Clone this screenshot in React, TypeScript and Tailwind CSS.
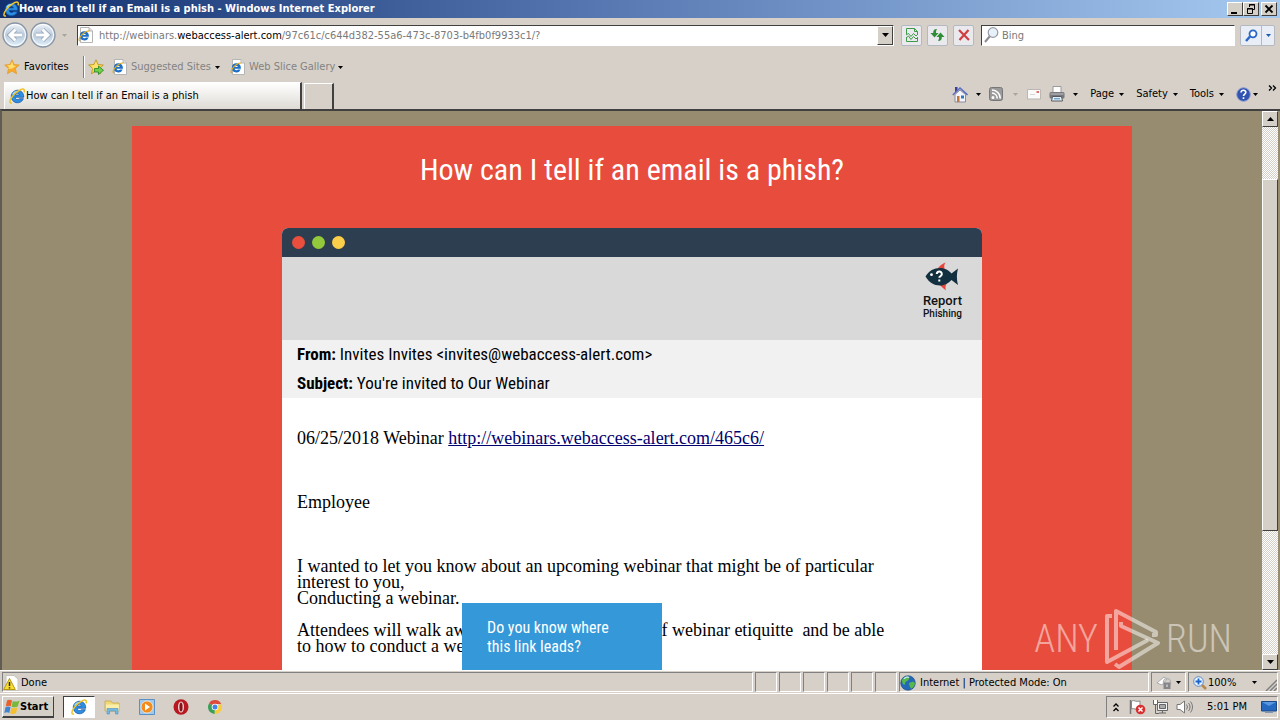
import type { ReactNode } from "react";

const raised = "border border-t-white border-l-white border-r-[#404040] border-b-[#404040] bg-[#d4d0c8]";
const sunken = "border border-t-[#808080] border-l-[#808080] border-r-white border-b-white";

function IeIcon({ className = "size-4" }: { className?: string }) {
  return (
    <svg viewBox="0 0 16 16" className={`shrink-0 ${className}`} aria-hidden="true">
      <path
        d="M8.400 2.200a6.300 6.300 0 1 0 6 8.500h-4a2.400 2.400 0 0 1-4.300-1.400h8.600c.3-4.200-2.500-7.100-6.300-7.100Zm-2.300 4.700a2.300 2.300 0 0 1 4.400 0Z"
        fill="#2d8fe2"
        stroke="#0f4fa2"
        strokeWidth=".7"
      />
      <path d="M3.600 6.500C4.500 4.500 6.300 3.500 8.500 3.500" fill="none" stroke="#a5e2ff" strokeWidth="1.200" />
      <path
        d="M3 15C-.2 15.600.6 12 3.400 8.400 6.800 4 12.400.2 14.700 1.300c1 .7.8 1.900.2 3"
        fill="none"
        stroke="#f0c428"
        strokeWidth="1.500"
      />
    </svg>
  );
}

function IePageIcon() {
  return (
    <svg viewBox="0 0 16 16" className="size-4 shrink-0" aria-hidden="true">
      <path d="M2.500.5h8.500l3.500 3.500v11.500h-12Z" fill="#fff" stroke="#b5b5b5" />
      <path d="M11 .5V4h3.500" fill="#ddd" stroke="#b5b5b5" />
      <path
        d="M6.300 4.300a4.600 4.600 0 1 0 4.400 6.300H8a1.900 1.900 0 0 1-3.400-.9h6.300C11.200 6.500 9.100 4.300 6.300 4.300ZM4.700 8.100a1.800 1.800 0 0 1 3.300 0Z"
        fill="#1d6fc8"
      />
      <path
        d="M2.200 13.900C0 13.800 1.300 10.900 3.600 8.200 6.200 5.200 9.800 3.200 11.200 4.300"
        fill="none"
        stroke="#e0ac20"
        strokeWidth="1.200"
      />
    </svg>
  );
}

function Caret({ className = "text-black" }: { className?: string }) {
  return (
    <svg viewBox="0 0 5 3" className={`h-[3px] w-[5px] shrink-0 ${className}`} aria-hidden="true">
      <path d="M0 0h5L2.500 3Z" fill="currentColor" />
    </svg>
  );
}

function StarIcon({ add = false }: { add?: boolean }) {
  return (
    <svg viewBox="0 0 16 16" className="size-4 shrink-0" aria-hidden="true">
      <path
        d="m8 .8 2.100 4.700 5.200.5-3.900 3.500 1.200 5.300L8 12.100l-4.600 2.700 1.200-5.300L.7 6l5.200-.5Z"
        fill={add ? "#f8d84a" : "#f9a82c"}
        stroke={add ? "#b8901a" : "#e0a030"}
        strokeWidth=".8"
      />
      <path d="M8 2.500 9.300 6.500 12 7 8 9.500 4.500 10 5 8 3 6.500l3.500-.5Z" fill="#ffe070" />
      {add && <path d="M6.500 9.500h4V7l5 4.300-5 4.200V13h-4Z" fill="#6fd04a" stroke="#22842a" strokeWidth=".8" />}
    </svg>
  );
}

function TitleBar() {
  return (
    <header className="flex h-[18px] shrink-0 items-center bg-linear-to-r from-[#12306f] from-0% via-[#5b7cb5] via-50% to-[#a6caf0] px-[3px] text-white">
      <IeIcon />
      <h1 className="font-['DejaVu_Sans_Condensed','DejaVu_Sans',sans-serif] text-[11px] leading-4 font-bold whitespace-nowrap">
        How can I tell if an Email is a phish - Windows Internet Explorer
      </h1>
      <div className="ml-auto flex text-black">
        <button aria-label="Minimize" className={`h-[14px] w-4 ${raised}`}>
          <svg viewBox="0 0 14 12" className="h-3 w-[14px]">
            <path d="M3 9h6v2H3Z" />
          </svg>
        </button>
        <button aria-label="Restore" className={`h-[14px] w-4 ${raised}`}>
          <svg viewBox="0 0 14 12" className="h-3 w-[14px]" fill="none" stroke="#000">
            <path d="M5.500 4V1.500h5v5H9M5 2h6M3.500 5.500h5v5h-5ZM3 6h6" />
          </svg>
        </button>
        <button aria-label="Close" className={`ml-0.5 h-[14px] w-4 ${raised}`}>
          <svg viewBox="0 0 14 12" className="h-3 w-[14px]" fill="none" stroke="#000" strokeWidth="1.800">
            <path d="m3.500 2.500 7 7m0-7-7 7" />
          </svg>
        </button>
      </div>
    </header>
  );
}

function NavButtons() {
  return (
    <div className="flex items-center gap-0.5">
      {["Back", "Forward"].map((label) => {
        const arrow =
          label === "Back" ? "M20 13H8m5.500-5.500L8 13l5.500 5.500" : "M6 13h12m-5.500-5.500L18 13l-5.500 5.500";
        return (
          <button key={label} aria-label={label} className="size-[26px]">
            <svg viewBox="0 0 26 26" className="size-[26px]" fill="none">
              <defs>
                <linearGradient id={`nav-${label}`} x1="0" y1="0" x2="0" y2="1">
                  <stop offset="0" stopColor="#f1f5f9" />
                  <stop offset=".5" stopColor="#b9c9db" />
                  <stop offset="1" stopColor="#e3f2fc" />
                </linearGradient>
              </defs>
              <circle cx="13" cy="13" r="12" fill={`url(#nav-${label})`} stroke="#8795a6" strokeWidth="1.300" />
              <circle cx="13" cy="13" r="10.500" stroke="#fff" />
              <path d={arrow} stroke="#8fa2b8" strokeWidth="4.500" />
              <path d={arrow} stroke="#fff" strokeWidth="3" />
            </svg>
          </button>
        );
      })}
    </div>
  );
}

function SquareButton({ label, children }: { label: string; children: ReactNode }) {
  return (
    <button
      aria-label={label}
      className="flex h-[21px] w-[21px] items-center justify-center rounded-[2px] border border-[#b4b8c0] bg-[#e9e9ee]"
    >
      {children}
    </button>
  );
}

function AddressRow() {
  return (
    <div className="flex h-[34px] shrink-0 items-center pr-[5px] pl-0.5">
      <NavButtons />
      <button aria-label="Recent pages" className="ml-1.5 mr-[9px] flex h-4 w-1.5 items-center">
        <Caret className="text-[#a8a49e]" />
      </button>
      <div className="flex h-[21px] min-w-0 flex-1 items-center border border-t-[#404040] border-l-[#404040] border-r-white border-b-white bg-white">
        <IePageIcon />
        <div
          role="textbox"
          aria-label="Address"
          contentEditable
          suppressContentEditableWarning
          className="ml-[5px] min-w-0 flex-1 pt-0.5 text-[11px] leading-4 whitespace-nowrap text-[#7a7a7a] outline-none"
        >
          http://webinars.<span className="text-black">webaccess-alert.com</span>
          /97c61c/c644d382-55a6-473c-8703-b4fb0f9933c1/?
        </div>
        <button aria-label="Show addresses" className={`flex h-[19px] w-4 items-center justify-center ${raised}`}>
          <svg viewBox="0 0 7 4" className="h-1 w-[7px]">
            <path d="M0 0h7L3.500 4Z" />
          </svg>
        </button>
      </div>
      <div className="ml-[7px] flex gap-[5px]">
        <SquareButton label="Compatibility view">
          <svg viewBox="0 0 14 14" className="size-[14px]" fill="none" stroke="#3f9a48">
            <path d="M1.500 6V.5h8l3 3V6M9.500.5v3h3M1.500 9v4.500h11V9" />
            <path d="m1 7 2.500-1.500L6 8.500l2.500-3L11 8l2-2M1 10l2.500-2L6 11.500 8.500 8.500 11 11l2-2" />
          </svg>
        </SquareButton>
        <SquareButton label="Refresh">
          <svg viewBox="0 0 15 14" className="h-[14px] w-[15px]" fill="#2f8d36">
            <path d="M7 1C4 1 3.200 2.400 3.200 5H.5l4 4.500 4-4.500H6c0-1.500 0-2.300 1-4ZM8 13c3 0 3.800-1.400 3.800-4h2.700l-4-4.500-4 4.500H9c0 1.500 0 2.300-1 4Z" />
          </svg>
        </SquareButton>
        <SquareButton label="Stop">
          <svg viewBox="0 0 12 12" className="size-3" fill="none" stroke="#cf4040" strokeWidth="2.200">
            <path d="m1 1 10 10M10.500 1 1.500 11" />
          </svg>
        </SquareButton>
      </div>
      <label className="ml-[7px] flex h-[21px] w-[254px] items-center border border-t-[#404040] border-l-[#404040] border-r-white border-b-white bg-white pl-0.5">
        <svg viewBox="0 0 15 16" className="h-4 w-[15px] shrink-0" aria-hidden="true">
          <path d="m1 15 5-6" stroke="#8b8b93" strokeWidth="2" />
          <circle cx="9" cy="5.500" r="4.800" fill="#e6f1f8" stroke="#9a9aa6" strokeWidth="1.200" />
        </svg>
        <input
          aria-label="Search"
          placeholder="Bing"
          className="ml-[3px] min-w-0 flex-1 pt-0.5 text-[11px] leading-4 outline-none placeholder:text-[#7a7a7a]"
        />
      </label>
      <div className="ml-[5px] flex h-[21px] rounded-[2px] border border-[#b4b8c0] bg-[#e9edf5]">
        <button aria-label="Go" className="flex w-5 items-center justify-center">
          <svg viewBox="0 0 13 13" className="size-[13px]" fill="none" stroke="#2a68c8">
            <path d="m1 12 4-4.500" strokeWidth="2.500" />
            <circle cx="8" cy="4.800" r="3.500" strokeWidth="1.800" fill="#fff" />
          </svg>
        </button>
        <button aria-label="Search options" className="flex w-[13px] items-center justify-center border-l border-[#b4b8c0]">
          <Caret className="text-[#1e58b0]" />
        </button>
      </div>
    </div>
  );
}

function FavoritesRow() {
  return (
    <nav className="flex h-7 shrink-0 items-center pt-0.5 pl-1 text-[11px] leading-4 text-[#838383]">
      <button className="flex w-[79px] items-center gap-1 text-black">
        <StarIcon />
        Favorites
      </button>
      <div className="mr-[3px] h-[22px] border-l border-[#808080] bg-white pr-px" />
      <button aria-label="Add to favorites" className="mr-2">
        <StarIcon add />
      </button>
      <button className="flex w-[118px] items-center gap-[3px]">
        <IePageIcon />
        Suggested Sites
        <span className="pl-px">
          <Caret />
        </span>
      </button>
      <button className="flex items-center gap-[3px]">
        <IePageIcon />
        Web Slice Gallery
        <Caret />
      </button>
    </nav>
  );
}

function CommandBar() {
  return (
    <div className="mb-[3px] ml-auto flex items-center pr-[3px] text-[11px] leading-4">
      <button aria-label="Home" className="flex w-[37px] items-center gap-2">
        <svg viewBox="0 0 16 17" className="h-[17px] w-4">
          <path d="M3 8.500 8 4l5.500 4.500V16H3Z" fill="#f4f4fa" stroke="#8a8aa0" />
          <path d="M3 1h2.500v4L3 7Z" fill="#3a3f9c" />
          <path d="M.8 9 8 2l7.500 7" fill="none" stroke="#5a6fc0" strokeWidth="1.600" />
          <path d="M5 10h2.500v6H5Z" fill="#c07838" />
          <path d="M9 9.500h3v3H9Z" fill="#2a78c8" />
        </svg>
        <Caret />
      </button>
      <button aria-label="Feeds" className="flex w-[38px] items-center gap-2.5">
        <svg viewBox="0 0 14 14" className="size-[14px]" fill="none" stroke="#fff" strokeWidth="1.600">
          <rect x=".5" y=".5" width="13" height="13" rx="2" fill="#9a9a9a" stroke="#777" strokeWidth="1" />
          <path d="M3 6a5.500 5.500 0 0 1 5.200 5.500M3 3a8.500 8.500 0 0 1 8.300 8.500" />
          <circle cx="4" cy="10.500" r=".7" />
        </svg>
        <Caret className="text-[#a8a49e]" />
      </button>
      <button aria-label="Read mail" className="w-[22px]">
        <svg viewBox="0 0 14 11" className="h-[11px] w-[14px]">
          <path d="M.5.5h13v9.500H.5Z" fill="#fafafa" stroke="#bbb6b0" />
          <path d="M9.500 2h2.500v2H9.500Z" fill="#e07070" />
          <path d="M3 5.500h5" stroke="#d8d4d0" />
        </svg>
      </button>
      <button aria-label="Print" className="flex w-[41px] items-center gap-2">
        <svg viewBox="0 0 16 16" className="size-4">
          <path d="M4 .5h8V7H4Z" fill="#fff" stroke="#999" />
          <rect x=".5" y="6" width="15" height="6.500" rx="1.500" fill="#77797e" />
          <path d="M1.500 8h13" stroke="#c4c6c8" />
          <path d="M3.500 10.500h9l1 4.500h-11Z" fill="#e4f0f8" stroke="#55585e" />
          <path d="M5 12.800h6" stroke="#3c88c0" />
        </svg>
        <Caret />
      </button>
      {["Page", "Safety", "Tools"].map((label) => (
        <button key={label} className="mr-3 flex items-center gap-[5px]">
          {label}
          <Caret />
        </button>
      ))}
      <button aria-label="Help" className="mr-2.5 flex items-center gap-0.5">
        <svg viewBox="0 0 15 15" className="size-[15px]">
          <circle cx="7.500" cy="7.500" r="6.800" fill="#3054b0" stroke="#8b9bd0" />
          <path d="M5 5.500C5.200 2.500 10 2.700 9.800 5.500 9.700 7 7.500 7.200 7.500 9m0 1.300v1.700" fill="none" stroke="#fff" strokeWidth="1.600" />
        </svg>
        <Caret />
      </button>
      <button aria-label="More commands" className="mb-3">
        <svg viewBox="0 0 9 6" className="h-1.5 w-[9px]" fill="none" stroke="#000" strokeWidth="1.300">
          <path d="m1 .5 2.500 2.500L1 5.500m4-5 2.500 2.500L5 5.500" />
        </svg>
      </button>
    </div>
  );
}

function TabRow() {
  return (
    <div className="flex h-[29px] shrink-0 items-stretch pt-0.5 pl-1">
      <button className="flex w-[298px] items-center gap-px border-t border-r-2 border-l border-t-white border-r-[#404040] border-l-white bg-linear-to-b from-white to-[#dedbd5] pl-1 text-[11px] leading-4 whitespace-nowrap">
        <IeIcon />
        How can I tell if an Email is a phish
      </button>
      <button
        aria-label="New tab"
        className="ml-0.5 mt-px w-[30px] border-t border-r-2 border-l border-t-white border-r-[#404040] border-l-white"
      />
      <CommandBar />
    </div>
  );
}

function ReportPhishing() {
  return (
    <button className="flex flex-col items-center font-[Roboto,sans-serif] text-[#111]">
      <svg viewBox="0 0 34 30" className="h-[30px] w-[34px]" aria-hidden="true">
        <path d="M12 7.500C14 4 17 2 20.500.5c-1.500 2.500-1.800 4.500-.3 7.500Z" fill="#e8463c" />
        <path d="M14.500 22.500c2.500 3 4.500 4 6.500 6-.8-2.500-.7-4.500.5-6.500Z" fill="#e8463c" />
        <path
          d="M.5 14.500C4 8.800 9 6 15 6c5 0 8.500 2.300 11.500 5.500L33 6.500c-1.500 5-1.500 11.500 0 16.500l-6.500-5C23.500 21 20 23.500 15 23.500 9 23.500 4 20.500.5 14.500Z"
          fill="#12303f"
        />
        <circle cx="6.500" cy="12.700" r="1.400" fill="#fff" />
        <path d="M11.800 12c.2-3.600 5.200-3.300 5 .2-.1 2-2.500 2-2.500 3.500m0 1.800v2" fill="none" stroke="#fff" strokeWidth="2" />
      </svg>
      <span className="pt-0.5 text-[13px] leading-[14px] font-medium">Report</span>
      <span className="text-[10px] leading-3 font-medium">Phishing</span>
    </button>
  );
}

function Mail() {
  return (
    <article className="relative mx-auto mt-[39px] w-[700px] rounded-t-md bg-white">
      <div className="flex h-[29px] items-center gap-[7px] rounded-t-md bg-[#2d3e50] pl-2.5">
        <span className="size-[13px] rounded-full bg-[#ea4f3d]" />
        <span className="size-[13px] rounded-full bg-[#93ca3c]" />
        <span className="size-[13px] rounded-full bg-[#fbcf4a]" />
      </div>
      <div className="flex h-[83px] items-start justify-end bg-[#d9d9d9] pt-[5px] pr-5">
        <ReportPhishing />
      </div>
      <div className="bg-[#f1f1f1] pl-[15px] font-['Roboto_Condensed',Roboto,sans-serif] text-[17px] leading-[29px] text-black">
        <p>
          <b>From:</b> Invites Invites &lt;invites@webaccess-alert.com&gt;
        </p>
        <p>
          <b>Subject:</b> You're invited to Our Webinar
        </p>
      </div>
      <div className="pt-8 pb-16 pl-[15px] font-['Liberation_Serif',serif] text-[18px] leading-4 whitespace-pre text-black">
        <p>
          06/25/2018 Webinar{" "}
          <a href="#leads" className="text-[#00006e] underline">
            http://webinars.webaccess-alert.com/465c6/
          </a>
        </p>
        <p className="mt-12">Employee</p>
        <p className="mt-12">
          I wanted to let you know about an upcoming webinar that might be of particular
          <br />
          interest to you,
          <br />
          Conducting a webinar.
        </p>
        <p className="mt-4">
          Attendees will walk away with an understanding of webinar etiquitte {" "}and be able
          <br />
          to how to conduct a webinar.
        </p>
      </div>
      <aside
        id="leads"
        className="absolute top-[375px] left-[180px] w-[200px] bg-[#3598d8] px-[25px] pt-[15px] pb-6 font-['Roboto_Condensed',Roboto,sans-serif] text-[16px] leading-[19px] whitespace-nowrap text-white"
      >
        Do you know where
        <br />
        this link leads?
      </aside>
    </article>
  );
}

function ScrollBar() {
  return (
    <div className="flex w-4 shrink-0 flex-col bg-[repeating-conic-gradient(#fff_0_25%,#d4d0c8_0_50%)] bg-size-[2px_2px]">
      <button aria-label="Scroll up" className={`flex h-4 items-center justify-center ${raised}`}>
        <svg viewBox="0 0 7 4" className="h-1 w-[7px]">
          <path d="M0 4h7L3.500 0Z" />
        </svg>
      </button>
      <div className="flex min-h-0 flex-1 flex-col pt-[52px]">
        <div className={`h-[74%] ${raised}`} />
      </div>
      <button aria-label="Scroll down" className={`flex h-4 items-center justify-center ${raised}`}>
        <svg viewBox="0 0 7 4" className="h-1 w-[7px]">
          <path d="M0 0h7L3.500 4Z" />
        </svg>
      </button>
    </div>
  );
}

function Watermark() {
  return (
    <div className="absolute right-12 bottom-0 flex items-center gap-1.5 font-['Roboto_Condensed',Roboto,sans-serif] text-[38px] leading-[60px] font-light text-white/50">
      <span>ANY</span>
      <svg viewBox="0 0 56 62" className="h-[62px] w-14" fill="none" stroke="currentColor" strokeWidth="4" strokeLinejoin="round" aria-hidden="true">
        <path d="M8 8H3v46L44 32" />
        <path d="M12 42V3l40 21v3h-4" />
        <path d="M17 14v4l37 17-39 24-4-3" />
      </svg>
      <span>RUN</span>
    </div>
  );
}

function Page() {
  return (
    <div className="relative flex min-h-0 flex-1 border-t-2 border-l-2 border-t-[#404040] border-l-[#605c54] bg-[#988c70] pr-0.5">
      <main className="min-w-0 flex-1 overflow-hidden pt-[15px]">
        <div className="mx-auto min-h-full max-w-[1000px] bg-[#e74c3c] pt-[25px]">
          <h2 className="text-center font-['Roboto_Condensed',Roboto,sans-serif] text-[30px] leading-[38px] text-white">
            How can I tell if an email is a phish?
          </h2>
          <Mail />
        </div>
      </main>
      <ScrollBar />
      <Watermark />
    </div>
  );
}

function StatusBar() {
  return (
    <div className="flex h-[23px] shrink-0 gap-0.5 border-t border-white px-0.5 py-px text-[11px] leading-4">
      <div className={`flex flex-1 items-center gap-0.5 pt-px ${sunken}`}>
        <svg viewBox="0 0 16 16" className="size-4" aria-hidden="true">
          <path d="M3 .5h8l4 3.500v11.500H3Z" fill="#fff" stroke="#c8c4bc" />
          <path d="M6.500 3.500 12.300 14.500H.7Z" fill="#f8de30" stroke="#b89810" strokeLinejoin="round" />
          <path d="M6.500 7v4m0 1.200v1.300" stroke="#222" strokeWidth="1.500" />
        </svg>
        Done
      </div>
      {[1, 2, 3, 4, 5, 6].map((n) => (
        <div key={n} className={`w-[22px] ${sunken}`} />
      ))}
      <div className={`flex w-[250px] items-center gap-1 pt-px ${sunken}`}>
        <svg viewBox="0 0 16 16" className="size-4" aria-hidden="true">
          <circle cx="8" cy="8" r="7.300" fill="#2468b8" stroke="#1c4880" strokeWidth=".6" />
          <path d="M2 5c2-3.500 5.500-4 7.500-3l-1 3-3 2-1 3C3 9.500 2 8 2 5ZM9 8l4-1.500 2 1.500c0 2.500-2 5-4 5.800L9.500 11Z" fill="#58b848" />
          <path d="M4 3.800C5.500 2 8 1.800 9 2.500" fill="none" stroke="#c8ecff" strokeWidth="1.300" />
        </svg>
        Internet | Protected Mode: On
      </div>
      <button aria-label="Privacy" className={`flex w-[35px] items-center justify-between px-1 ${sunken}`}>
        <svg viewBox="0 0 16 15" className="h-[15px] w-4">
          <path d="M1 8 8 2l3 2-5 6Z" fill="#fff" stroke="#aaa" />
          <circle cx="11" cy="7" r="3.500" fill="none" stroke="#b5b5b5" strokeWidth="1.500" />
          <path d="M7.500 7.500h7V14h-7Z" fill="#85868a" />
          <path d="M11 9.500v2.500" stroke="#eee" />
        </svg>
        <Caret />
      </button>
      <div className={`flex w-[90px] items-center pl-1 ${sunken}`}>
        <button className="flex flex-1 items-center pt-px pr-2">
          <svg viewBox="0 0 14 14" className="mr-px size-[14px]" aria-hidden="true">
            <path d="m9 9 4 4" stroke="#b88848" strokeWidth="2.500" />
            <circle cx="5.500" cy="5.500" r="4.800" fill="#e8f4ff" stroke="#5a88c8" />
            <path d="M5.500 2.500v6m-3-3h6" stroke="#1c64c8" strokeWidth="1.800" />
          </svg>
          100%
          <span className="ml-auto">
            <Caret />
          </span>
        </button>
        <svg viewBox="0 0 12 12" className="mt-auto size-3 shrink-0" stroke="#808080" aria-hidden="true">
          <path d="M1 12 12 1M5 12l7-7M9 12l3-3" strokeWidth="1.500" />
        </svg>
      </div>
    </div>
  );
}

function WindowsFlag() {
  return (
    <svg viewBox="0 0 16 16" className="size-4 shrink-0" aria-hidden="true">
      <path d="M3 1.500c2-1 3.500-.8 5 0L6.800 7.300c-1.600-.9-3-.9-5 0Z" fill="#e8602c" />
      <path d="M8.800 2c1.700.9 3.900.8 6.700-.3L13.700 7.500c-2 1-4.200 1-6.100.2Z" fill="#78b83c" />
      <path d="M1.500 8.200c2-.9 3.500-.8 5 0L5.300 14c-1.600-.9-3-.9-5 0Z" fill="#3f84d4" />
      <path d="M7.400 8.600c1.700.9 3.900.8 6.100-.3l-1.500 5.900c-2 1-4 1-5.900.1Z" fill="#f4c030" />
    </svg>
  );
}

function TaskBar() {
  return (
    <footer className="flex h-[27px] shrink-0 items-center border-t border-white px-0.5">
      <button className={`flex h-[22px] w-[52px] items-center border-b-2 pl-px font-['DejaVu_Sans_Condensed','DejaVu_Sans',sans-serif] text-[11px] leading-4 font-bold ${raised}`}>
        <WindowsFlag />
        Start
      </button>
      <button
        aria-label="Internet Explorer"
        className="ml-[9px] flex h-[22px] w-8 items-center justify-center border border-t-[#404040] border-l-[#404040] border-r-white border-b-white bg-white"
      >
        <IeIcon />
      </button>
      <div className="ml-[9px] flex gap-[18px]">
        <button aria-label="Explorer">
          <svg viewBox="0 0 17 16" className="h-4 w-[17px]">
            <path d="M1 2h6l1.500 2H15v8H1Z" fill="#f0d878" stroke="#c8a848" strokeWidth=".8" />
            <path d="M2 5.500h13V12H2Z" fill="#faeea8" />
            <path d="M3 15V9.500h11V15h-2.500v-3h-6v3Z" fill="#78b8e0" stroke="#4890c0" strokeWidth=".6" />
          </svg>
        </button>
        <button aria-label="Media Player">
          <svg viewBox="0 0 16 16" className="size-4">
            <path d="M.5.5h15v15H.5Z" fill="#a4c8e8" stroke="#5890c8" />
            <circle cx="8" cy="8" r="6" fill="#f28c1c" stroke="#fff" strokeWidth=".6" />
            <path d="m6 4.500 5 3.500-5 3.500Z" fill="#fff" />
          </svg>
        </button>
        <button aria-label="Opera">
          <svg viewBox="0 0 16 16" className="size-4">
            <ellipse cx="8" cy="8" rx="7.500" ry="7.700" fill="#b81820" />
            <ellipse cx="8" cy="8" rx="3" ry="5.500" fill="#f0dada" />
            <ellipse cx="8" cy="8" rx="1.600" ry="4.600" fill="#8a1018" />
          </svg>
        </button>
        <button aria-label="Chrome">
          <svg viewBox="0 0 16 16" className="size-4">
            <path d="M8 8 2 4.400A7 7 0 0 1 14.200 5H8Z" fill="#dd4b3c" />
            <path d="M8 8 14.200 5A7 7 0 0 1 7.500 15Z" fill="#f8cc3c" />
            <path d="M8 8 7.500 15A7 7 0 0 1 2 4.400Z" fill="#38a058" />
            <circle cx="8" cy="8" r="3.300" fill="#fff" />
            <circle cx="8" cy="8" r="2.500" fill="#4484e8" />
          </svg>
        </button>
      </div>
      <div className={`ml-auto flex h-[22px] w-[172px] items-center pl-1.5 text-[11px] leading-4 ${sunken}`}>
        <button aria-label="Show hidden icons" className="mr-2.5">
          <svg viewBox="0 0 6 9" className="h-[9px] w-1.5" fill="none" stroke="#000" strokeWidth="1.300">
            <path d="m.5 3.500 2.500-2.500 2.500 2.500m-5 4.500 2.500-2.500 2.500 2.500" />
          </svg>
        </button>
        <svg viewBox="0 0 17 16" className="mr-1.5 h-4 w-[17px] shrink-0" aria-hidden="true">
          <path d="M1.500 1v14" stroke="#777" strokeWidth="1.500" />
          <path d="M2.500 2c3-1.500 4 1.500 8.500 0v8c-4.500 1.500-5.500-1.500-8.500 0Z" fill="#fff" stroke="#888" />
          <circle cx="11.500" cy="10.500" r="4.800" fill="#d83030" />
          <path d="m9.500 8.500 4 4m0-4-4 4" stroke="#fff" strokeWidth="1.500" />
        </svg>
        <svg viewBox="0 0 16 16" className="mr-2 size-4 shrink-0" fill="none" stroke="#666" aria-hidden="true">
          <path d="M5.500 3.500h10v8h-10Z" fill="#f4f4f4" />
          <path d="M7.500 5.500h6v4h-6Z" fill="#aaa" />
          <path d="M7 14h7M10.500 11.500V14M3.500 7v7.500H7" />
          <path d="M1.500 1v4.500h4V1M3.500 5v3" fill="#fff" />
        </svg>
        <svg viewBox="0 0 17 14" className="h-[14px] w-[17px] shrink-0" fill="none" stroke="#777" aria-hidden="true">
          <path d="M1 4.500h3L8.500 1v12L4 9.500H1Z" fill="#fff" />
          <path d="M10.500 4.500a4 4 0 0 1 0 5M12.500 3a6 6 0 0 1 0 8M14.500 1.500a8.500 8.500 0 0 1 0 11" />
        </svg>
        <time className="mx-auto whitespace-nowrap">5:01 PM</time>
        <svg viewBox="0 0 16 14" className="h-[14px] w-4 shrink-0" aria-hidden="true">
          <path d="M.5 1.500h15v9.500H.5Z" fill="#2468c0" stroke="#1c4888" />
          <path d="M1 2h14L8 6Z" fill="#5898e0" />
          <path d="M4 12.500h8" stroke="#8098b0" />
        </svg>
      </div>
    </footer>
  );
}

export default function App() {
  return (
    <div className="flex h-screen flex-col overflow-hidden bg-[#d6d0c9] font-['DejaVu_Sans_Condensed','DejaVu_Sans',sans-serif] text-black">
      <TitleBar />
      <AddressRow />
      <FavoritesRow />
      <TabRow />
      <Page />
      <StatusBar />
      <TaskBar />
    </div>
  );
}
